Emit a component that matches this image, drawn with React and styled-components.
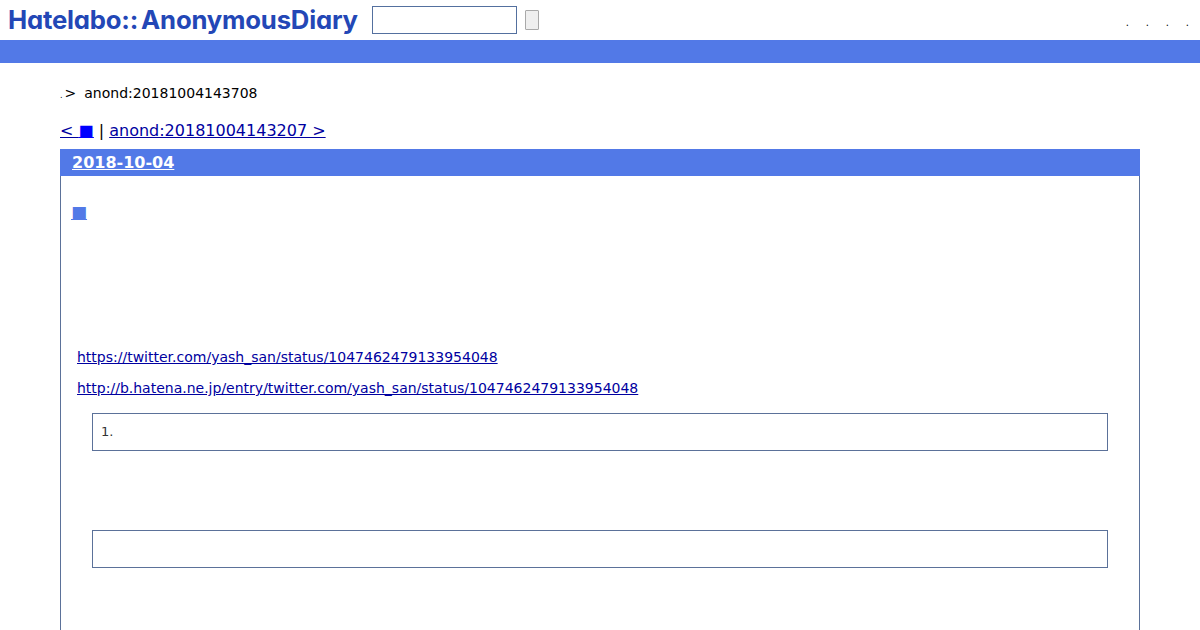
import React from 'react';
import styled, { createGlobalStyle } from 'styled-components';

const GlobalStyle = createGlobalStyle`
  html, body {
    margin: 0;
    padding: 0;
    height: 630px;
    overflow: hidden;
    background: #fff;
    color: #000;
    font-family: "DejaVu Sans", Verdana, sans-serif;
  }
  a { color: #0000a0; }
`;

const Header = styled.header`
  height: 40px;
  display: flex;
  align-items: center;
  padding-left: 8px;
  position: relative;
`;

const Logo = styled.div`
  width: 350px;
  font-family: "Inter", "Lato", "Liberation Sans", sans-serif;
  font-feature-settings: "cv11" 1;
  font-weight: 700;
  font-size: 25.7px;
  line-height: 39px;
  height: 40px;
  letter-spacing: -0.2px;
  color: #2347b6;
  white-space: nowrap;
`;

const LogoTail = styled.span`
  margin-left: 3px;
`;

const SearchForm = styled.form`
  display: flex;
  align-items: center;
  margin-left: 14px;
  gap: 8px;
`;

const SearchInput = styled.input`
  box-sizing: border-box;
  width: 145px;
  height: 28px;
  border: 1px solid #54709f;
  background: #fff;
  padding: 0;
`;

const SearchButton = styled.button`
  box-sizing: border-box;
  width: 14px;
  height: 20px;
  padding: 0;
  border: 1px solid #a9a9a9;
  border-radius: 1px;
  background: #efefef;
`;

const TopMenu = styled.ul`
  list-style: none;
  margin: 0 0 0 auto;
  padding: 6px 11px 0 0;
  display: flex;
  font-size: 10px;
  line-height: 12px;
  color: #000;
  li {
    width: 20px;
    text-align: right;
  }
`;

const Bar = styled.div`
  height: 23px;
  background: #5279e7;
`;

const Main = styled.main`
  padding: 0 60px;
`;

const Crumbs = styled.p`
  margin: 0;
  padding-top: 21px;
  font-size: 14px;
  line-height: 18px;
  display: flex;
  align-items: baseline;
`;

const CrumbDot = styled.span`
  font-size: 8px;
  margin-right: 2px;
`;

const CrumbName = styled.span`
  margin-left: 8px;
`;

const Pager = styled.div`
  margin-top: 16px;
  font-size: 16px;
  line-height: 20px;
`;

const Square = styled.a`
  color: #0000ff;
`;

const Day = styled.section`
  margin-top: 8px;
  border: 1px solid #5b7199;
  border-top: 0;
  height: 600px;
`;

const DayTitle = styled.h1`
  margin: 0 -1px;
  height: 27px;
  padding-left: 12px;
  background: #5279e7;
  font-size: 16px;
  font-weight: 700;
  line-height: 27px;
  a { color: #fff; }
`;

const Section = styled.div`
  padding: 26px 16px 0 10px;
`;

const SectionMark = styled.a`
  display: inline-block;
  color: #5279e7;
  font-size: 17px;
  line-height: 20px;
  height: 20px;
`;

const UrlLine = styled.p`
  margin: 0 0 13px 6px;
  font-size: 14px;
  line-height: 18px;
`;

const Urls = styled.div`
  margin-top: 126px;
  padding-bottom: 3px;
`;

const Quote = styled.div`
  box-sizing: border-box;
  margin: 0 15px 79px 21px;
  height: 38px;
  border: 1px solid #5b7199;
  padding-left: 8px;
  font-size: 13px;
  line-height: 36px;
  color: #333;
`;

export default function App() {
  return (
    <>
      <GlobalStyle />
      <Header>
        <Logo>Hatelabo::<LogoTail>AnonymousDiary</LogoTail></Logo>
        <SearchForm onSubmit={(e) => e.preventDefault()}>
          <SearchInput type="text" />
          <SearchButton type="submit" />
        </SearchForm>
        <TopMenu>
          <li>.</li>
          <li>.</li>
          <li>.</li>
          <li>.</li>
        </TopMenu>
      </Header>
      <Bar />
      <Main>
        <Crumbs>
          <CrumbDot>.</CrumbDot>
          <span>&gt;</span>
          <CrumbName>anond:20181004143708</CrumbName>
        </Crumbs>
        <Pager>
          <a href="#prev">&lt; <Square as="a" href="#top">■</Square></a> | <a href="#next">anond:20181004143207 &gt;</a>
        </Pager>
        <Day>
          <DayTitle><a href="#day">2018-10-04</a></DayTitle>
          <Section>
            <SectionMark href="#entry">■</SectionMark>
            <Urls>
              <UrlLine><a href="#tweet">https://twitter.com/yash_san/status/1047462479133954048</a></UrlLine>
              <UrlLine><a href="#bookmark">http://b.hatena.ne.jp/entry/twitter.com/yash_san/status/1047462479133954048</a></UrlLine>
            </Urls>
            <Quote>1.</Quote>
            <Quote />
          </Section>
        </Day>
      </Main>
    </>
  );
}
